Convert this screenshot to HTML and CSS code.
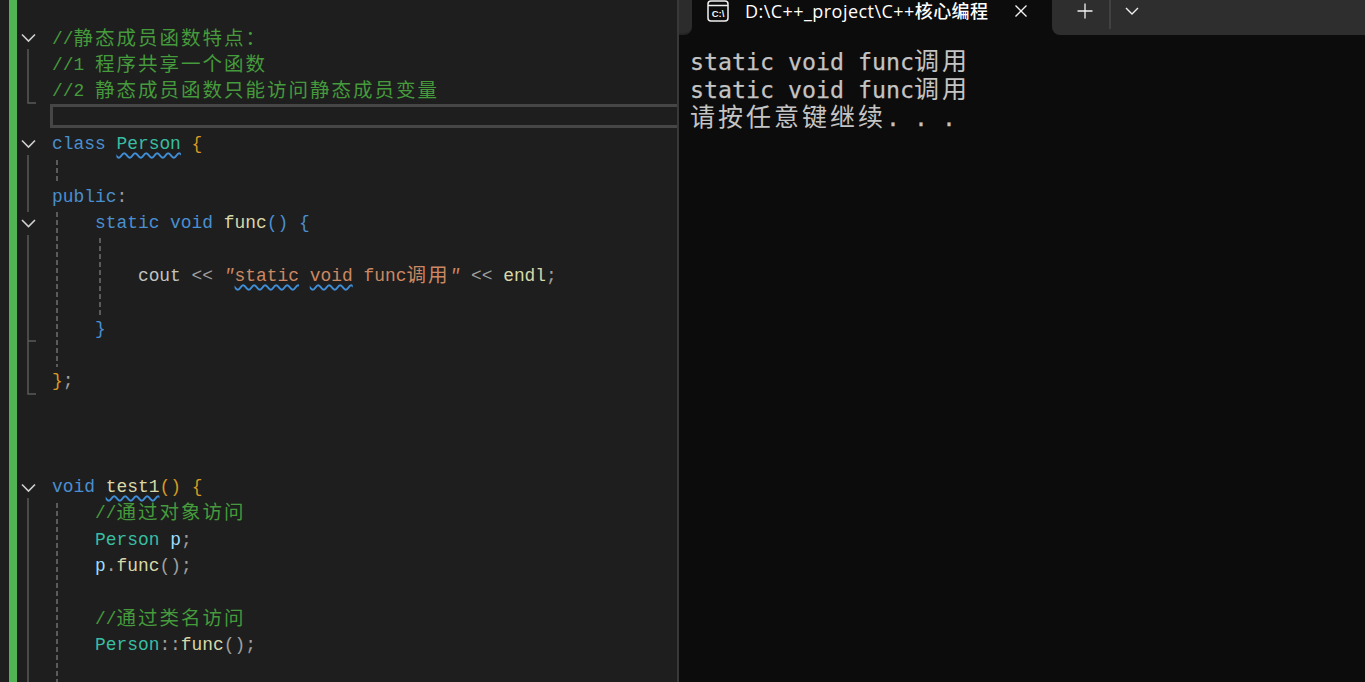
FILE: index.html
```html
<!DOCTYPE html>
<html lang="zh">
<head>
<meta charset="utf-8">
<title>C++核心编程</title>
<link rel="stylesheet" href="styles.css">
</head>
<body>
<div class="app">
  <section class="editor">
    <div class="margin"></div>
    <div class="changebar"></div>
    <div class="code">
      <div class="line c"><span>//</span><span class="z">静态成员函数特点：</span></div>
      <div class="line c"><span>//1 </span><span class="z">程序共享一个函数</span></div>
      <div class="line c"><span>//2 </span><span class="z">静态成员函数只能访问静态成员变量</span></div>
      <div class="line selected"></div>
      <div class="line"><span class="k">class</span> <span class="t sq">Person</span> <span class="b">{</span></div>
      <div class="line"></div>
      <div class="line"><span class="k">public</span><span class="p">:</span></div>
      <div class="line">    <span class="k">static void</span> <span class="f">func</span><span class="k">()</span> <span class="k">{</span></div>
      <div class="line"></div>
      <div class="line">        <span class="o">cout</span> <span class="p">&lt;&lt;</span> <span class="s"><span class="q">"</span><span class="sq">static</span> <span class="sq">void</span> func<span class="z">调用</span><span class="q">"</span></span> <span class="p">&lt;&lt;</span> <span class="f">endl</span><span class="p">;</span></div>
      <div class="line"></div>
      <div class="line">    <span class="k">}</span></div>
      <div class="line"></div>
      <div class="line"><span class="b">}</span><span class="p">;</span></div>
      <div class="line"></div>
      <div class="line"></div>
      <div class="line"></div>
      <div class="line"><span class="k">void</span> <span class="f sq">test1</span><span class="b">()</span> <span class="b">{</span></div>
      <div class="line c">    <span>//</span><span class="z">通过对象访问</span></div>
      <div class="line">    <span class="t">Person</span> <span class="v">p</span><span class="p">;</span></div>
      <div class="line">    <span class="v">p</span><span class="p">.</span><span class="f">func</span><span class="p">();</span></div>
      <div class="line"></div>
      <div class="line c">    <span>//</span><span class="z">通过类名访问</span></div>
      <div class="line">    <span class="t">Person</span><span class="p">::</span><span class="f">func</span><span class="p">();</span></div>
    </div>
    <svg class="folds" width="110" height="682" viewBox="0 0 110 682" fill="none" aria-hidden="true">
      <g class="chevrons">
        <path d="M22 34.5 28.5 41 35 34.5"/>
        <path d="M22 140.5 28.5 147 35 140.5"/>
        <path d="M22 220 28.5 226.500 35 220"/>
        <path d="M22 484.500 28.5 491 35 484.500"/>
      </g>
      <g class="foldlines">
        <path d="M28 49V103H36"/>
        <path d="M28 155V212"/>
        <path d="M28 235V394H36M28 341H36"/>
        <path d="M28 498V682"/>
      </g>
      <g class="guides">
        <path d="M57 160V183"/>
        <path d="M57 212V367"/>
        <path d="M100 238V315"/>
        <path d="M57 503V682"/>
      </g>
    </svg>
  </section>
  <section class="terminal">
    <header class="strip">
      <div class="strip-start"></div>
      <div class="tab">
        <svg class="tab-icon" width="22" height="22" viewBox="0 0 22 22" fill="none">
          <rect x="1" y="1" width="20" height="20" rx="3"/>
          <path d="M1 5.500H21"/>
          <text class="glyph" x="11" y="17" text-anchor="middle">C:\</text>
        </svg>
        <span class="tab-title">D:\C++_project\C++核心编程</span>
        <svg class="tab-close" width="14" height="14" viewBox="0 0 14 14" fill="none"><path d="M1.500 1.500 12.500 12.500M12.500 1.500 1.500 12.500"/></svg>
      </div>
      <div class="strip-end">
        <svg class="add" width="16" height="16" viewBox="0 0 16 16" fill="none"><path d="M0.500 8H15.500M8 0.500V15.500"/></svg>
        <span class="sep"></span>
        <svg class="more" width="14" height="8" viewBox="0 0 14 8" fill="none"><path d="M1 1 7 7 13 1"/></svg>
      </div>
    </header>
    <div class="output">
      <div class="out">static void func<span class="w">调用</span></div>
      <div class="out">static void func<span class="w">调用</span></div>
      <div class="out"><span class="w">请按任意键继续</span>. . .</div>
    </div>
  </section>
</div>
</body>
</html>
```

FILE: styles.css
```css
* { box-sizing: border-box; }
html, body { margin: 0; height: 100%; overflow: hidden; background: #1e1e1e; }
.app { display: flex; width: 1365px; height: 682px; overflow: hidden; }

.editor { position: relative; display: flex; width: 679px; flex: none; background: #1e1e1e; border-right: 2px solid #383838; overflow: hidden; }
.margin { width: 9px; flex: none; background: #1e1e1e; }
.changebar { width: 8px; flex: none; background: #50b455; }
.code { flex: 1; min-width: 0; padding: 25.6px 0 0 35px; font: 17.9px/26.38px "Liberation Mono", "Noto Sans CJK SC", monospace; color: #c8c8c8; }
.line { height: 26.38px; white-space: pre; }
.selected { height: 24px; margin: -0.6px 0 2.98px -2px; border: 3px solid #464646; border-right: 0; }

.c { color: #459a3c; }
.k { color: #4a8fd0; }
.t { color: #38bda2; }
.f { color: #d8d8a8; }
.v { color: #9cdcfe; }
.o { color: #c0c4c0; }
.s { color: #cc8862; }
.q { font-style: italic; }
.p { color: #a0a0a0; }
.b { color: #d49a22; }
.z { font-family: "Noto Sans CJK SC", sans-serif; font-size: 19.5px; letter-spacing: 2px; line-height: 1; vertical-align: -1px; }
.sq { text-decoration: underline wavy #3f8ed8 1.8px; text-underline-offset: 3px; }

.folds { position: absolute; left: 0; top: 0; }
.chevrons path { stroke: #d0d0d0; stroke-width: 1.6; }
.foldlines path { stroke: #5a5a5a; stroke-width: 1.5; }
.guides path { stroke: #707070; stroke-width: 1.5; stroke-dasharray: 5 3; }

.terminal { flex: 1; min-width: 0; display: flex; flex-direction: column; background: #0c0c0c; }
.strip { display: flex; height: 35px; flex: none; background: #0c0c0c; }
.strip-start { width: 13px; flex: none; background: #2c2c2c; border-bottom: 2px solid #252525; border-bottom-right-radius: 8px; }
.tab { width: 360px; flex: none; display: flex; align-items: flex-start; padding-left: 15px; color: #fff; background: #0c0c0c; }
.tab-icon { flex: none; }
.tab-icon rect, .tab-icon > path { stroke: #f0f0f0; stroke-width: 1.5; }
.tab-icon .glyph { fill: #f4f4f4; font: 700 9.5px "Liberation Sans", sans-serif; }
.tab-title { margin-left: 16px; width: 269px; flex: none; font: 500 18px/23px "Open Sans", "Noto Sans CJK SC", sans-serif; letter-spacing: 0.45px; white-space: pre; }
.tab-close { flex: none; margin-top: 4px; }
.tab-close path { stroke: #f2f2f2; stroke-width: 1.3; }
.strip-end { flex: 1; display: flex; align-items: flex-start; background: #2e2e2e; border-bottom-left-radius: 8px; }
.add { flex: none; margin: 3px 0 0 25px; }
.add path { stroke: #f2f2f2; stroke-width: 1.3; }
.sep { width: 2px; height: 29px; flex: none; margin-left: 16px; background: #414141; }
.more { flex: none; margin: 7px 0 0 14px; }
.more path { stroke: #f0f0f0; stroke-width: 1.4; }

.output { flex: 1; padding: 12px 0 0 11px; font: 23.25px/28px "DejaVu Sans Mono", "Noto Sans CJK SC", monospace; color: #c4c4c4; -webkit-text-stroke: 0.25px #c4c4c4; }
.out { height: 28px; white-space: pre; }
.w { font-family: "Noto Sans CJK SC", sans-serif; font-size: 25px; letter-spacing: 3px; line-height: 1; -webkit-text-stroke: 0; }
```
